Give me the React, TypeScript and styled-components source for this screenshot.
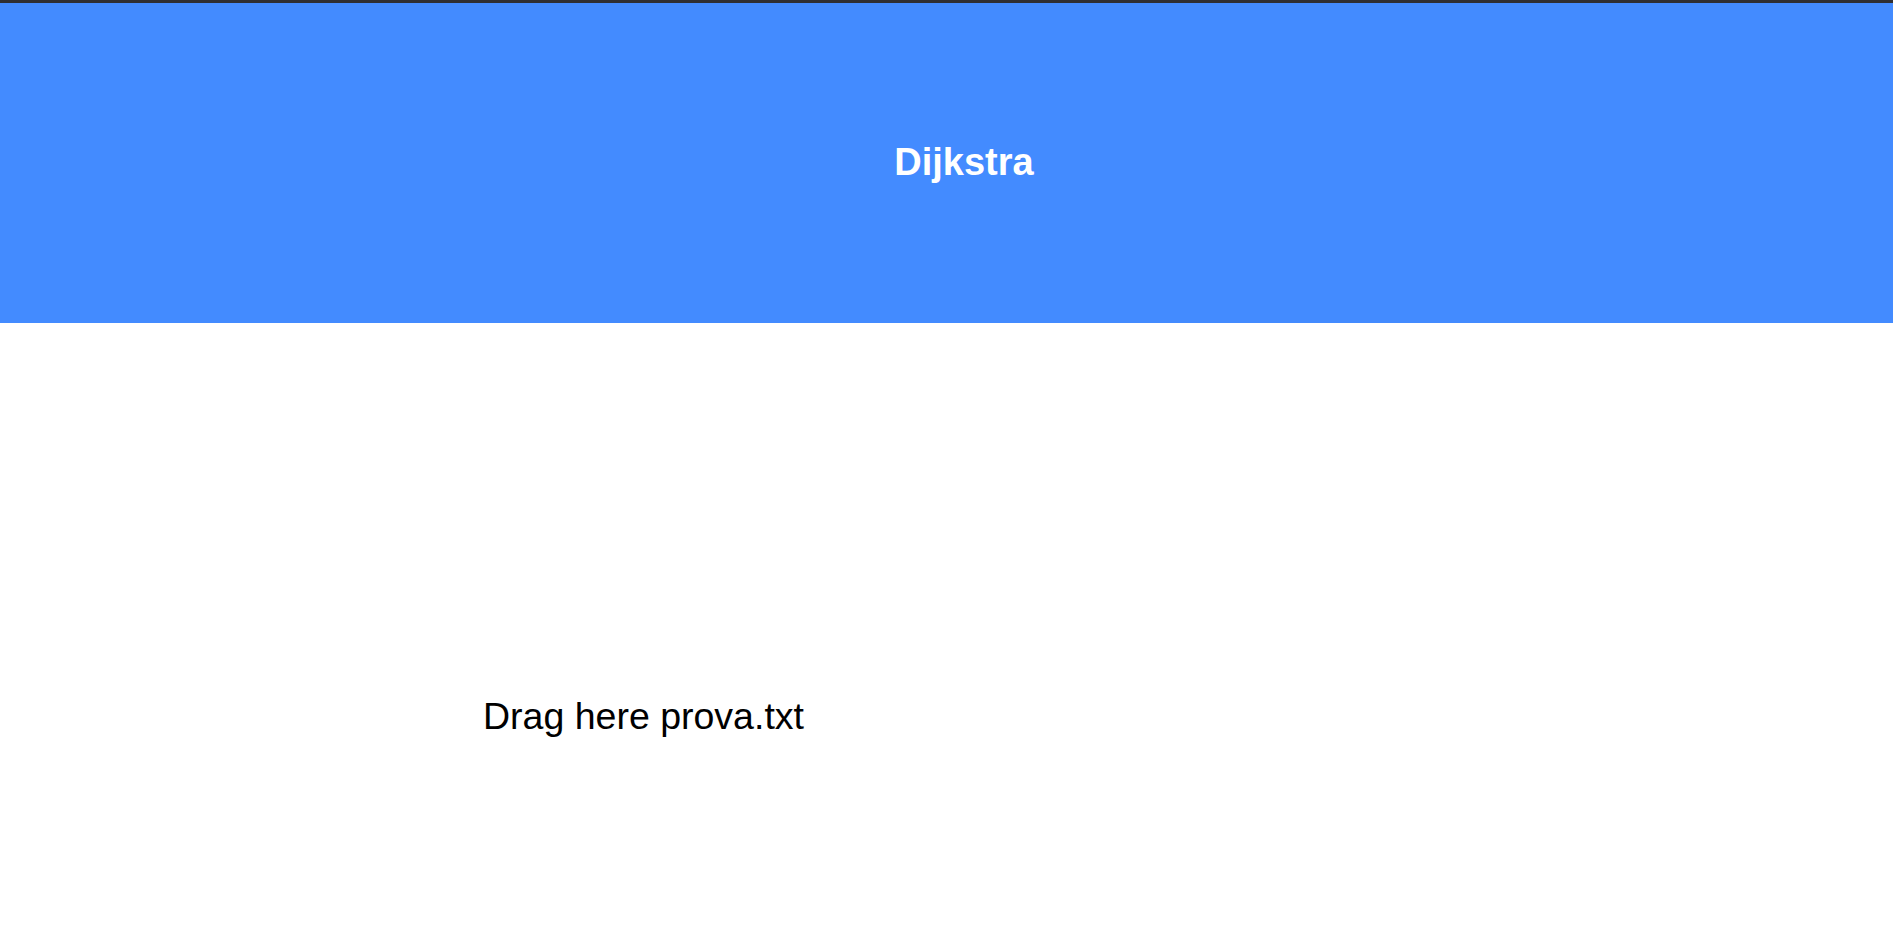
import React from "react";
import styled, { createGlobalStyle } from "styled-components";

const Global = createGlobalStyle`
  html, body { margin: 0; padding: 0; background: #ffffff; }
  body { font-family: "Liberation Sans", Arial, sans-serif; }
`;

const Page = styled.div`
  display: flex;
  flex-direction: column;
  min-height: 943px;
`;

const Header = styled.header`
  height: 320px;
  border-top: 3px solid #2f2f33;
  background: #438bff;
  display: flex;
  align-items: center;
  justify-content: center;
  padding-left: 35px;
`;

const Title = styled.h1`
  margin: 0;
  margin-top: -2px;
  color: #ffffff;
  font-size: 38px;
  font-weight: 700;
`;

const DropZone = styled.div`
  padding: 372px 0 0 483px;
  font-size: 37.5px;
  color: #000000;
`;

export default function App() {
  return (
    <Page>
      <Global />
      <Header>
        <Title>Dijkstra</Title>
      </Header>
      <DropZone>Drag here prova.txt</DropZone>
    </Page>
  );
}
